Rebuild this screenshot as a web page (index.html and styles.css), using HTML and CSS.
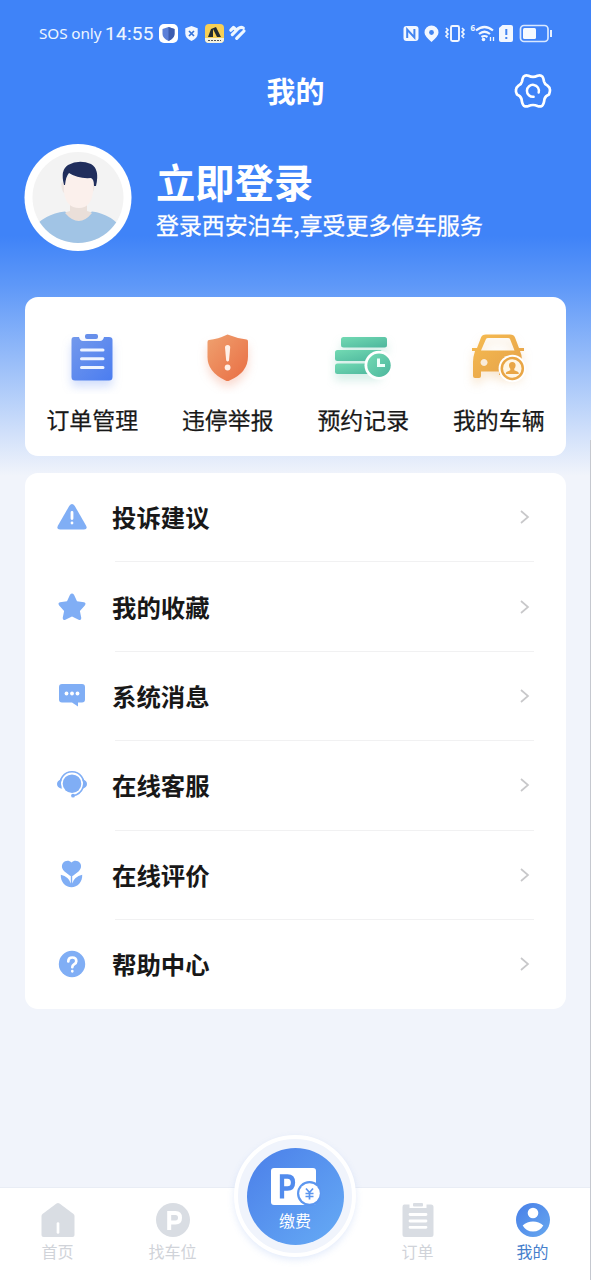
FILE: index.html
```html
<!DOCTYPE html>
<html lang="zh-CN">
<head>
<meta charset="utf-8">
<title>我的</title>
<link rel="stylesheet" href="styles.css">
</head>
<body>
<div class="screen">
  <header class="status">
    <span class="carrier">SOS only</span><span class="clock">14:55</span>
    <svg class="status-left" width="90" height="22" viewBox="158 22 90 22">
      <rect x="159" y="24" width="19" height="19" rx="5" fill="#fff"/>
      <path d="M168.500 27l6 2v5q0 4-6 7q-6-3-6-7v-5z" fill="#5b80d8"/><path d="M168.500 27l6 2v5q0 4-6 7z" fill="#3c5cae"/>
      <path d="M191.500 26l6.200 2.300v5.200q0 4.500-6.200 7.500q-6.200-3-6.200-7.500v-5.200z" fill="#f2f7ff"/>
      <path d="M189 31l5 5m0-5l-5 5" stroke="#3674da" stroke-width="1.700"/>
      <rect x="205" y="24" width="19" height="19" rx="4" fill="#f7cf55"/>
      <path d="M205 38h19v1q0 4-4 4h-11q-4 0-4-4z" fill="#f4f1df"/><path d="M208 37l3-8 5-2 5 10h-4l-4-8v8z" fill="#242b30"/>
      <path d="M208 40.500h13" stroke="#555" stroke-dasharray="2 1"/>
      <path d="M230.800 30.200l2.700-2.700 2 1.800M232.300 34.600l6-6.100q2.500-2 5-.5M236.700 38.400l7.300-7.400" fill="none" stroke="#eef7ff" stroke-width="3.200" stroke-linecap="round" stroke-linejoin="round"/>
    </svg>
    <svg class="status-right" width="154" height="22" viewBox="400 22 154 22">
      <rect x="403.500" y="26" width="15" height="15" rx="3" fill="#f2f7ff"/><path d="M407.200 38v-8.500l7.200 8V29" fill="none" stroke="#4284f0" stroke-width="2"/>
      <path d="M431.500 42q-7-6-7-9.500a7 7 0 0 1 14 0q0 3.500-7 9.500z" fill="#f2f7ff"/><circle cx="431.500" cy="32.500" r="2.400" fill="#4284f0"/>
      <rect x="451" y="26" width="8" height="15" rx="1.500" fill="none" stroke="#f2f7ff" stroke-width="1.900"/>
      <path d="M446 28l2 2-2 2 2 2-2 2 2 2M462 28l2 2-2 2 2 2-2 2 2 2" fill="none" stroke="#f2f7ff" stroke-width="1.600"/>
      <text class="wifi-mark" x="470.500" y="30.500">6</text>
      <path d="M476 30.500q8.500-7 17 0M479 34q5.500-4.500 11 0M481.500 37q3-2 6 0" fill="none" stroke="#f2f7ff" stroke-width="2.200"/><circle cx="483.500" cy="39.500" r="1.800" fill="#f2f7ff"/><path d="M490.500 37v4m3 0v-4" stroke="#f2f7ff" stroke-width="1.300"/>
      <path d="M502.500 25h8.500q2 0 2 2v13q0 2-2 2h-10q-2 0-2-2V28z" fill="#f2f7ff"/><path d="M506.300 29v6m0 2v2" stroke="#4284f0" stroke-width="2"/>
      <rect x="520.500" y="25.500" width="27.500" height="16" rx="3.500" fill="none" stroke="#d9e8ff" stroke-width="1.700"/><rect x="523" y="28" width="13" height="11" rx="1.500" fill="#f6faff"/><path d="M551 30v7" stroke="#e7f0ff" stroke-width="2"/>
    </svg>
  </header>

  <div class="titlebar">
    <h1>我的</h1>
    <svg class="gear" width="38" height="38" viewBox="-19 -19 38 38">
      <path d="M-9.500-14.300Q-7.500-16.500-4.500-15.200Q0-13 4.500-15.200Q7.500-16.500 9.500-14.300Q10.500-13 11-9.500Q11.500-7 14.500-5.300Q17-3.500 17-1Q17 1 16 3.500Q12.500 4.800 11.500 8Q10.800 13.500 9 14.800Q7 16 4.500 15Q0 13 -4.500 15Q-7 16-9 14.800Q-10.800 13.500-11.500 8Q-12.500 4.800-16 3.500Q-17.500 1-17-1Q-17-3.500-14.500-5.300Q-11.500-7-11-9.500Q-10.500-13-9.500-14.300Z" fill="none" stroke="#fff" stroke-width="2.700" stroke-linejoin="round"/>
      <path d="M.6 5.800A6 6 0 1 1 5.700 1.500" fill="none" stroke="#fff" stroke-width="2.500" stroke-linecap="round"/>
    </svg>
  </div>

  <section class="profile">
    <svg class="avatar" width="108" height="108" viewBox="24 143 108 108">
      <defs><clipPath id="face"><circle cx="78" cy="197.500" r="45.500"/></clipPath></defs>
      <circle cx="78" cy="197.500" r="53.500" fill="#fff"/><circle cx="78" cy="197.500" r="45.500" fill="#f3f3f3"/>
      <g clip-path="url(#face)">
        <path d="M31 231Q43 214 65 211.500Q78 221 92 211.500Q112 214 124 231V250H31z" fill="#a1c4e5"/>
        <path d="M70 201h17v10q4 1 5 2q-13 16-27 0q1-1 5-2z" fill="#eadfd9"/>
        <path d="M63 182q-3 0-1 7q1 5 4 4m26-11q4 0 2 7q-1 5-4 4" fill="#eee5e1"/>
        <path d="M64 179q14-9 29 1v12q-2 16-14 16q-13 0-15-16z" fill="#fbf0ec"/>
        <path d="M64 185q-4-15 4-20q11-6 23-1q9 5 5 22h-2q0-7-3-8q-13 1-22-5q-3 3-4 12z" fill="#202e5c"/>
      </g>
    </svg>
    <div class="intro"><h2>立即登录</h2><p>登录西安泊车,享受更多停车服务</p></div>
  </section>

  <section class="actions">
    <div class="action">
      <svg width="72" height="72" viewBox="56 322 72 72">
        <defs><linearGradient id="blue" x1="0" y1="0" x2="1" y2="1"><stop stop-color="#7399ec"/><stop offset="1" stop-color="#4b7df0"/></linearGradient></defs>
        <g class="glow-blue"><path d="M74 337h5q1 4 4 4h17q3 0 4-4h5q3.500 0 3.500 3v37q0 3.500-3.500 3.500H75q-3.500 0-3.500-3.500v-37q0-3 2.500-3z" fill="url(#blue)"/><rect x="85" y="334" width="13" height="5" rx="2" fill="#668eea"/></g>
        <path d="M81.500 350h21.500m-21.500 8.700H103m-21.500 8.700H103" stroke="#eef4ff" stroke-width="3" stroke-linecap="round"/>
      </svg><span>订单管理</span>
    </div>
    <div class="action">
      <svg width="72" height="72" viewBox="192 322 72 72">
        <defs><linearGradient id="red" x1="0" y1="0" x2="1" y2="1"><stop stop-color="#efa16f"/><stop offset="1" stop-color="#e96d43"/></linearGradient></defs>
        <path class="glow-red" d="M227.500 334.500q10 4 19 5q1.500 0 1.500 2v15q0 16-18.500 24q-2 1-4 0Q207.500 372 207.500 357v-15q0-2 1.500-2q9-1 18.500-5.500z" fill="url(#red)"/>
        <path d="M225 347.500q0-2.500 2.600-2.500t2.600 2.500l-1.200 13q-1.400 2.200-2.800 0z" fill="#fff0e7"/><circle cx="227.600" cy="367.500" r="2.900" fill="#fff0e7"/>
      </svg><span>违停举报</span>
    </div>
    <div class="action">
      <svg width="72" height="72" viewBox="327 322 72 72">
        <defs><linearGradient id="green" x1="0" y1="0" x2="1" y2="1"><stop stop-color="#72dab3"/><stop offset="1" stop-color="#4db69d"/></linearGradient></defs>
        <g class="glow-green" fill="url(#green)"><rect x="341" y="337" width="46" height="10.500" rx="2.500"/><rect x="335" y="350" width="47" height="11" rx="2.500"/><rect x="335" y="363.500" width="46" height="10.500" rx="2.500"/></g>
        <circle cx="379" cy="365.300" r="14.500" fill="#fff"/><circle cx="379" cy="365.300" r="11.700" fill="url(#green)"/><path d="M378.500 358.500v7h6.500" fill="none" stroke="#edfff9" stroke-width="3"/>
      </svg><span>预约记录</span>
    </div>
    <div class="action">
      <svg width="72" height="72" viewBox="463 322 72 72">
        <defs><linearGradient id="gold" x1="0" y1="0" x2="1" y2="1"><stop stop-color="#f6bb50"/><stop offset="1" stop-color="#e4a049"/></linearGradient></defs>
        <g class="glow-gold" fill="url(#gold)"><path fill-rule="evenodd" d="M486 334.500h24q4 0 5 3l4 10.500h5v3h-4q2 4 2 9v11q0 4-3 4h-20v-3.500h-18v4.500q0 2-2 2h-4q-2 0-2-2v-14q0-5 2-11h-3v-3h5l4-10.500q1-3 5-3zM486 339l-5 11.500h33.500l-4.500-11.500q-.5-1-2-1h-20q-1.500 0-2 1zM484 359a3.500 3.500 0 1 0 .1 0"/></g>
        <circle cx="512.300" cy="368.500" r="13.700" fill="#fff"/><circle cx="512.300" cy="368.500" r="10.500" fill="#fff6e5" stroke="#e9a646" stroke-width="2.500"/><path d="M512.300 362q3.300 0 3.300 3.500 0 1.800-1.300 3.300v1.500l3.500 1.500q1 .5 1 2.200h-13q0-1.700 1-2.200l3.500-1.500v-1.500q-1.300-1.500-1.300-3.300 0-3.500 3.300-3.500z" fill="#e9a646"/>
      </svg><span>我的车辆</span>
    </div>
  </section>

  <section class="menu">
    <div class="row"><svg class="icon" width="32" height="32" viewBox="-16 -16 32 32"><path d="M-2.800-11q2.800-4 5.600 0L14 8.500q2 4-2 4h-24q-4 0-2-4z"/><path d="M0-4.500v6m0 4.500v.1" class="cut"/></svg><span>投诉建议</span><svg class="chevron" viewBox="0 0 10 16"><path d="M1 2l7 6-7 6"/></svg></div>
    <div class="row"><svg class="icon" width="32" height="32" viewBox="-16 -16 32 32"><path d="M-2-12.200q2-2.600 4 0l3 6.400 7 1q2.600.8.800 3.200L7.900 4l1.400 7q0 2.800-2.700 1.800L0 9.400l-6.600 3.400q-2.700 1-2.700-1.800l1.400-7-4.900-5.600q-1.800-2.400.8-3.200l7-1z"/></svg><span>我的收藏</span><svg class="chevron" viewBox="0 0 10 16"><path d="M1 2l7 6-7 6"/></svg></div>
    <div class="row"><svg class="icon" width="32" height="32" viewBox="-16 -16 32 32"><path d="M-10-12h20q3 0 3 3V3.500q0 3-3 3H6V10.500L0 6.500h-10q-3 0-3-3V-9q0-3 3-3z"/><g fill="#fff"><circle cx="-5.500" cy="-2.500" r="1.900"/><circle cx="0" cy="-2.500" r="1.900"/><circle cx="5.500" cy="-2.500" r="1.900"/></g></svg><span>系统消息</span><svg class="chevron" viewBox="0 0 10 16"><path d="M1 2l7 6-7 6"/></svg></div>
    <div class="row"><svg class="icon" width="32" height="32" viewBox="-16 -16 32 32"><path d="M-11-5.500h2v9h-2q-4-1.200-4-4.500t4-4.500zM11-5.500H9v9h2q4-1.200 4-4.500t-4-4.500z"/><circle cx="0" cy="-1.300" r="11" fill="#fff"/><circle cx="0" cy="-1.300" r="9.300"/><path d="M-11.300 2A11.800 11.800 0 1 1 11.300 2Q8.500 9.500 1 10.700" fill="none" stroke="#80aef5" stroke-width="1.600"/><circle cx="1" cy="10.700" r="1.900"/></svg><span>在线客服</span><svg class="chevron" viewBox="0 0 10 16"><path d="M1 2l7 6-7 6"/></svg></div>
    <div class="row"><svg class="icon" width="32" height="32" viewBox="-16 -16 32 32"><path d="M-.5-12.500C2-15 6-14.500 8-12C10-9 9-6 6.500-3.500L1 .7Q-.5 1.500-2 .7L-7.500-3.500C-10-6-11-9-9-12C-7-14.500-3-15-.5-12.500z"/><path d="M-11.200-.2Q-3 1.800-1.200 8.500V1H.2V8.500Q2 1.800 10.200-.2C10.700 7 5.500 12.200-.5 12.200S-11.700 7-11.200-.2z"/></svg><span>在线评价</span><svg class="chevron" viewBox="0 0 10 16"><path d="M1 2l7 6-7 6"/></svg></div>
    <div class="row"><svg class="icon" width="32" height="32" viewBox="-16 -16 32 32"><circle cx="0" cy="0" r="13.200"/><path d="M-3.700-2.500q0-4 4-4t4 3.700q0 2-2.300 3.200Q.3 1.500.3 3.200m0 4v.1" class="cut mark"/></svg><span>帮助中心</span><svg class="chevron" viewBox="0 0 10 16"><path d="M1 2l7 6-7 6"/></svg></div>
  </section>

  <nav class="tabs">
    <div class="tab"><svg width="36" height="36" viewBox="-18 -18 36 36"><path d="M-1.500-16.500q1.500-1 3 0L15.500-6q1 .8 1 2v19q0 2-2 2h-29q-2 0-2-2V-4q0-1.200 1-2z"/><path d="M0 3.500v9" stroke="#fff" stroke-width="2.700" stroke-linecap="round"/></svg><span>首页</span></div>
    <div class="tab"><svg width="36" height="36" viewBox="-18 -18 36 36"><circle cx="0" cy="0" r="17"/><path d="M-3.800 10V-7H2.500Q7-7 7-2.300T2.500 2.400h-6" fill="none" stroke="#fff" stroke-width="4"/></svg><span>找车位</span></div>
    <div class="tab center"></div>
    <div class="tab"><svg width="36" height="36" viewBox="-18 -18 36 36"><path d="M-14-15.500h5.500v3.500h17v-3.500H13q2.500 0 2.500 2.500v27.500q0 2.500-2.500 2.500h-26q-2.500 0-2.500-2.500V-13q0-2.500 1.500-2.500z"/><rect x="-5" y="-17" width="10" height="3.500" rx="1"/><path d="M-8-5.500H8M-8 1H8M-8 7.300H8" stroke="#fff" stroke-width="2.800" stroke-linecap="round"/></svg><span>订单</span></div>
    <div class="tab active"><svg width="36" height="36" viewBox="-18 -18 36 36"><defs><linearGradient id="user" x1="0" y1="0" x2="1" y2="1"><stop stop-color="#487fe8"/><stop offset="1" stop-color="#67a8ef"/></linearGradient></defs><circle cx="0" cy="0" r="17" fill="url(#user)"/><circle cx="0" cy="-7" r="5.300" fill="#fff"/><path d="M-10.300 5.500Q-6 1.500 0 1.500T10.300 5.500Q7 11.500 0 11.500T-10.300 5.500z" fill="#fff"/></svg><span>我的</span></div>
    <div class="pay"><div class="pay-core">
      <svg width="52" height="40" viewBox="269 1166 52 40"><rect x="271" y="1168" width="45" height="37" rx="3" fill="#fff"/><path d="M282 1198.500v-22h5.500q5.500 0 5.500 6t-5.500 6H282" fill="none" stroke="#518bed" stroke-width="4.300"/><circle cx="309.500" cy="1193.500" r="12.500" fill="#5b96ef"/><circle cx="309.500" cy="1193.500" r="10.300" fill="#fff"/><path d="M306 1188.500l3.500 4 3.500-4m-3.500 4v7m-4-6h8m-8 3h8" fill="none" stroke="#5b96ef" stroke-width="1.700"/></svg><span>缴费</span>
    </div></div>
  </nav>
</div>
</body>
</html>
```
FILE: styles.css
```css
* { box-sizing: border-box; }
body { margin: 0; font-family: "Noto Sans CJK SC", sans-serif; }
h1, h2, p { margin: 0; }
svg { display: block; flex: none; }
.screen { position: relative; width: 591px; height: 1280px; overflow: hidden; display: flex; flex-direction: column; background: linear-gradient(#3f83f8 0, #3f83f8 236px, #5e98f8 285px, #9bbff9 365px, #d2e1fa 435px, #f1f4fb 476px); }
.screen::after { content: ""; position: absolute; right: 0; top: 440px; bottom: 0; width: 1px; background: #c5c8cf; }
.status { height: 66px; padding: 0 37px 0 39px; display: flex; align-items: center; color: #eef6ff; white-space: nowrap; }
.carrier { width: 66px; font: 15.300px/22px "Noto Sans", sans-serif; letter-spacing: -.1px; }
.clock { width: 53px; padding-top: 1px; font: 19px/22px Roboto, sans-serif; letter-spacing: .3px; -webkit-text-stroke: .1px; }
.status-right { margin-left: auto; }
.wifi-mark { font: bold 8px "Open Sans", sans-serif; fill: #eef6ff; }
.titlebar { height: 50px; display: grid; grid-template-columns: 1fr auto 1fr; align-items: center; padding: 0 39px; color: #fff; }
.titlebar h1 { grid-column: 2; padding-bottom: 3px; font-size: 29px; line-height: 42px; font-weight: 700; }
.gear { justify-self: end; }
.profile { height: 181px; padding: 27px 24px 0; display: flex; gap: 24px; color: #fff; }
.intro { padding-top: 10px; white-space: nowrap; }
.intro h2 { font-size: 39.300px; line-height: 56px; font-weight: 700; }
.intro p { font-size: 22.900px; line-height: 31px; -webkit-text-stroke: .3px; }
.actions { width: 541px; height: 159px; margin-left: 25px; padding-top: 25px; border-radius: 13px; background: #fff; display: grid; grid-template-columns: repeat(4, 135.500px); justify-content: center; flex: none; }
.action { display: flex; flex-direction: column; align-items: center; gap: 8px; font-size: 22.900px; line-height: 34px; color: #181818; white-space: nowrap; -webkit-text-stroke: .25px; }
.glow-blue { filter: drop-shadow(0 6px 5px #4b7df040); }
.glow-red { filter: drop-shadow(0 6px 5px #e96d4340); }
.glow-green { filter: drop-shadow(0 6px 5px #4db69d40); }
.glow-gold { filter: drop-shadow(0 6px 5px #e4a04940); }
.menu { width: 541px; height: 536px; margin: 17px 0 0 25px; border-radius: 13px; background: #fff; display: grid; grid-template-rows: repeat(6, 89.400px); flex: none; overflow: hidden; }
.row { position: relative; display: flex; align-items: center; padding: 0 36px 1px 31px; color: #181818; }
.row + .row::before { content: ""; position: absolute; top: -1px; left: 90px; right: 32px; height: 1px; background: #f1f1f2; }
.row > span { margin-left: 24px; font-size: 24.400px; line-height: 36px; font-weight: 700; white-space: nowrap; }
.icon { fill: #80aef5; }
.cut { stroke: #fff; stroke-width: 2.800; stroke-linecap: round; fill: none; }
.mark { stroke-width: 2.700; }
.chevron { width: 10px; height: 16px; margin-left: auto; fill: none; stroke: #c8c8ca; stroke-width: 1.700; }
.tabs { position: relative; height: 93px; margin-top: auto; background: #fff; display: grid; grid-template-columns: 115px 115px 130px 115px 115px; border-top: 1px solid #e9edf5; }
.tab { display: flex; flex-direction: column; align-items: center; padding-top: 14px; fill: #d9dde3; color: #d0d3d9; font-size: 16px; line-height: 24px; }
.tab span { margin-top: 1px; }
.active { color: #4680cc; }
.pay { position: absolute; left: 234px; top: -53px; width: 122px; height: 122px; border-radius: 50%; border: 4px solid #fff; background: #f0f4fc; display: grid; place-items: center; box-shadow: 0 3px 7px #6898e92e; }
.pay-core { width: 97px; height: 97px; border-radius: 50%; background: linear-gradient(135deg, #4b7fe9, #66abf5); color: #fff; display: flex; flex-direction: column; align-items: center; padding-top: 18px; font-size: 16px; line-height: 24px; }
.pay-core span { margin-top: 2px; }
```
